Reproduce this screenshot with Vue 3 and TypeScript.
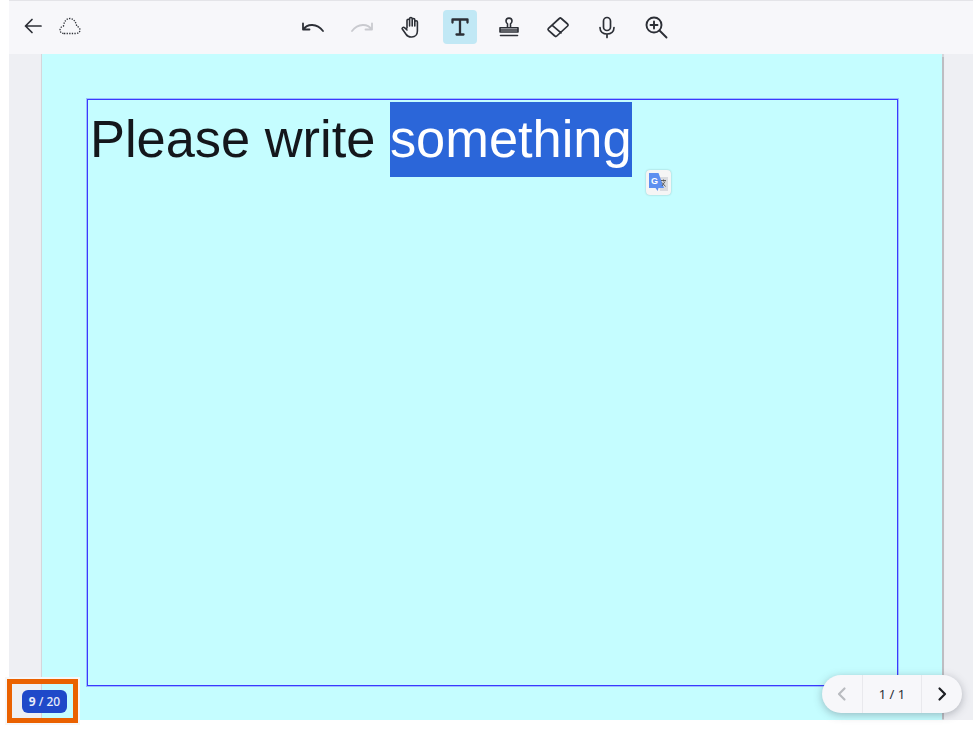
<script setup lang="ts">
const iconStroke = '#2c2f36'
</script>

<template>
  <div class="root">
    <header class="toolbar">
      <div class="left">
        <button class="icon-btn" aria-label="Back">
          <svg width="24" height="24" viewBox="0 0 24 24" fill="none" :stroke="iconStroke" stroke-width="1.7" stroke-linecap="round" stroke-linejoin="round">
            <path d="M20 12H4.500M11 5.500 4.500 12l6.500 6.500" />
          </svg>
        </button>
        <button class="icon-btn cloud" aria-label="Saved">
          <svg width="24" height="24" viewBox="0 0 24 24" fill="none" :stroke="iconStroke" stroke-width="1.300" stroke-dasharray="1.300 1.300">
            <path d="M6 19.500h12c2.500 0 4-1.600 4-3.500 0-1.800-1.400-3.200-3.200-3.500C18 8 15.500 4.500 12 4.500c-3.500 0-6 3-6.500 7.500C3.500 12.500 2 14.200 2 16c0 2 1.800 3.500 4 3.500Z" />
          </svg>
        </button>
      </div>
      <div class="tools">
        <button class="icon-btn" aria-label="Undo">
          <svg width="24" height="24" viewBox="0 0 24 24" fill="none" :stroke="iconStroke" stroke-width="1.800" stroke-linecap="round" stroke-linejoin="round">
            <path d="M2.500 14.500 C6 8.500 16 8 22 16M2 8.500v6h6.500" />
          </svg>
        </button>
        <button class="icon-btn" aria-label="Redo">
          <svg width="24" height="24" viewBox="0 0 24 24" fill="none" stroke="#c9cacf" stroke-width="1.800" stroke-linecap="round" stroke-linejoin="round">
            <path d="M21.500 14.500 C18 8.500 8 8 2 16M22 8.500v6h-6.500" />
          </svg>
        </button>
        <button class="icon-btn" aria-label="Hand">
          <svg width="24" height="24" viewBox="0 0 24 24" fill="none" :stroke="iconStroke" stroke-width="1.600" stroke-linecap="round" stroke-linejoin="round">
            <path d="M8 13V5.500a1.300 1.300 0 0 1 2.600 0V11M10.600 11V3.800a1.300 1.300 0 0 1 2.600 0V11M13.200 11V4.800a1.300 1.300 0 0 1 2.600 0V11M15.800 11V7a1.300 1.300 0 0 1 2.600 0v9c0 3.500-2.300 6-5.500 6H12c-2.500 0-3.800-1-5-2.800L3.300 14c-.7-1.100 1-2.300 2.200-1.300L8 15" />
          </svg>
        </button>
        <button class="icon-btn active" aria-label="Text">
          <svg width="24" height="24" viewBox="0 0 24 24" fill="none" :stroke="iconStroke" stroke-width="2.300" stroke-linecap="round" stroke-linejoin="round">
            <path d="M4.500 7.500V4.500h15v3M12 4.500v15M8.500 19.500h7" />
          </svg>
        </button>
        <button class="icon-btn" aria-label="Stamp">
          <svg width="24" height="24" viewBox="0 0 24 24" fill="none" :stroke="iconStroke" stroke-width="1.600" stroke-linecap="round" stroke-linejoin="round">
            <path d="M10.500 12.500V8.800C9.500 8.100 9 7.100 9 6.100a3 3 0 0 1 6 0c0 1-.5 2-1.500 2.700v3.700M3 12.800h18v4.200H3ZM3 15h18M3.500 20.500h17" />
          </svg>
        </button>
        <button class="icon-btn" aria-label="Eraser">
          <svg width="24" height="24" viewBox="0 0 24 24" fill="none" :stroke="iconStroke" stroke-width="1.700" stroke-linecap="round" stroke-linejoin="round">
            <path d="M13.300 3.500c.6-.6 1.400-.6 2 0l6.300 5.500c.6.600.6 1.400 0 2L10.800 21c-.6.600-1.400.6-2 0l-6.300-5.700c-.6-.6-.6-1.400 0-2ZM6 10.200l9 7.700" />
          </svg>
        </button>
        <button class="icon-btn" aria-label="Microphone">
          <svg width="24" height="24" viewBox="0 0 24 24" fill="none" :stroke="iconStroke" stroke-width="1.700" stroke-linecap="round" stroke-linejoin="round">
            <rect x="8.500" y="2.500" width="7" height="13" rx="3.500" />
            <path d="M5 12.500c0 4 3 6.500 7 6.500s7-2.500 7-6.500M12 19v3.500" />
          </svg>
        </button>
        <button class="icon-btn" aria-label="Zoom in">
          <svg width="24" height="24" viewBox="0 0 24 24" fill="none" :stroke="iconStroke" stroke-width="1.900" stroke-linecap="round" stroke-linejoin="round">
            <circle cx="10" cy="10" r="7.500" />
            <path d="M15.500 15.500 22.500 22.500M10 6.500v7M6.500 10h7" />
          </svg>
        </button>
      </div>
    </header>

    <main class="workspace">
      <section class="page">
        <div class="text-box">
          <p class="content">Please write <span class="selected">something</span></p>
        </div>
      </section>
    </main>

    <div class="translate" aria-label="Translate">
      <svg width="20" height="20" viewBox="0 0 20 20">
        <path d="M9 5h10v14h-8Z" fill="#d9dbdf" />
        <path d="M0 1h9.500L15 16H9.500l-.8 3L6.500 16H0Z" fill="#5d8ff0" />
        <text x="2" y="11.500" class="g">G</text>
        <path d="M12 8.500h5M14.500 7.500v2M13 14l3-4.500M13 10.500l3.500 4" stroke="#555" stroke-width="0.900" fill="none" />
      </svg>
    </div>

    <div class="counter-frame">
      <span class="counter"><b>9</b> / 20</span>
    </div>

    <nav class="pager">
      <button class="pager-btn" aria-label="Previous">
        <svg width="16" height="16" viewBox="0 0 16 16" fill="none" stroke="#b9bbc0" stroke-width="2.200" stroke-linecap="round" stroke-linejoin="round">
          <path d="M10.500 2.500 5 8l5.500 5.500" />
        </svg>
      </button>
      <span class="pager-label">1 / 1</span>
      <button class="pager-btn" aria-label="Next">
        <svg width="16" height="16" viewBox="0 0 16 16" fill="none" stroke="#1d1f24" stroke-width="2.200" stroke-linecap="round" stroke-linejoin="round">
          <path d="M5.500 2.500 11 8l-5.500 5.500" />
        </svg>
      </button>
    </nav>
  </div>
</template>

<style>
html,
body {
  margin: 0;
  background: #ffffff;
}
</style>

<style scoped>
.root {
  position: relative;
  width: 973px;
  height: 730px;
  box-sizing: border-box;
  padding: 0 0 10px 9px;
  display: flex;
  flex-direction: column;
  overflow: hidden;
  font-family: "Noto Sans", "Open Sans", sans-serif;
}
.toolbar {
  height: 54px;
  flex: none;
  box-sizing: border-box;
  border-top: 1px solid #e4e4e8;
  padding-bottom: 2px;
  background: #f7f7fa;
  position: relative;
  display: flex;
  align-items: center;
  justify-content: center;
}
.left {
  position: absolute;
  left: 7px;
  top: 8px;
  display: flex;
  gap: 1px;
}
.cloud {
  margin-left: 2px;
}
.tools {
  display: flex;
  gap: 15px;
  margin-left: -14px;
}
.icon-btn {
  width: 34px;
  height: 34px;
  padding: 0;
  border: 0;
  border-radius: 4px;
  background: transparent;
  display: flex;
  align-items: center;
  justify-content: center;
}
.icon-btn.active {
  background: #c1e8f5;
}
.workspace {
  flex: 1;
  min-height: 0;
  background: #eeeff3;
  padding-left: 33px;
  overflow: hidden;
}
.page {
  width: 900px;
  height: 100%;
  box-sizing: border-box;
  background: #c5fdff;
  box-shadow: -1.5px 0 1px #bdbdc2, 1.5px 0 1px #bdbdc2;
  padding: 45px 44px 0 45px;
}
.text-box {
  height: 587px;
  box-sizing: border-box;
  border: 1px solid #3a3aff;
  box-shadow: 0 0 0 1px rgba(90, 90, 255, 0.4);
  padding: 2px 0 0 2px;
}
.content {
  margin: 0;
  font-family: "Liberation Sans", Arial, sans-serif;
  font-size: 52.4px;
  line-height: 75px;
  color: #14171c;
  white-space: nowrap;
}
.selected {
  display: inline-block;
  background: #2b66d9;
  color: #ffffff;
}
.translate {
  position: absolute;
  left: 646px;
  top: 170px;
  width: 25px;
  height: 25px;
  box-sizing: border-box;
  padding: 2px 2px 3px 3px;
  border-radius: 4px;
  background: #f5f5f5;
  box-shadow: 0 0 2px rgba(0, 0, 0, 0.25);
}
.g {
  font-family: "Liberation Sans", Arial, sans-serif;
  font-size: 9px;
  font-weight: 700;
  fill: #ffffff;
}
.counter-frame {
  position: absolute;
  left: 7px;
  top: 679px;
  width: 71px;
  height: 44px;
  box-sizing: border-box;
  border: 5px solid #ea6100;
  outline: 2px solid #f7f7f7;
  padding-left: 4px;
  display: flex;
  align-items: center;
  justify-content: center;
}
.counter {
  width: 45px;
  height: 23px;
  border-radius: 6px;
  background: #1f49c9;
  color: #e8edfb;
  font-size: 12px;
  font-weight: 500;
  line-height: 23px;
  text-align: center;
}
.counter b {
  font-weight: 700;
}
.pager {
  position: absolute;
  left: 822px;
  top: 675px;
  width: 140px;
  height: 38px;
  border-radius: 19px;
  background: #f7f7fa;
  box-shadow: 0 2px 8px rgba(60, 65, 80, 0.35);
  display: flex;
  align-items: center;
}
.pager-btn {
  width: 40px;
  height: 38px;
  padding: 0;
  border: 0;
  background: transparent;
  display: flex;
  align-items: center;
  justify-content: center;
}
.pager-label {
  width: 60px;
  height: 38px;
  box-sizing: border-box;
  border-left: 1px solid #e9e9ed;
  border-right: 1px solid #e9e9ed;
  font-size: 13px;
  line-height: 38px;
  text-align: center;
  color: #2c2f36;
}
</style>
